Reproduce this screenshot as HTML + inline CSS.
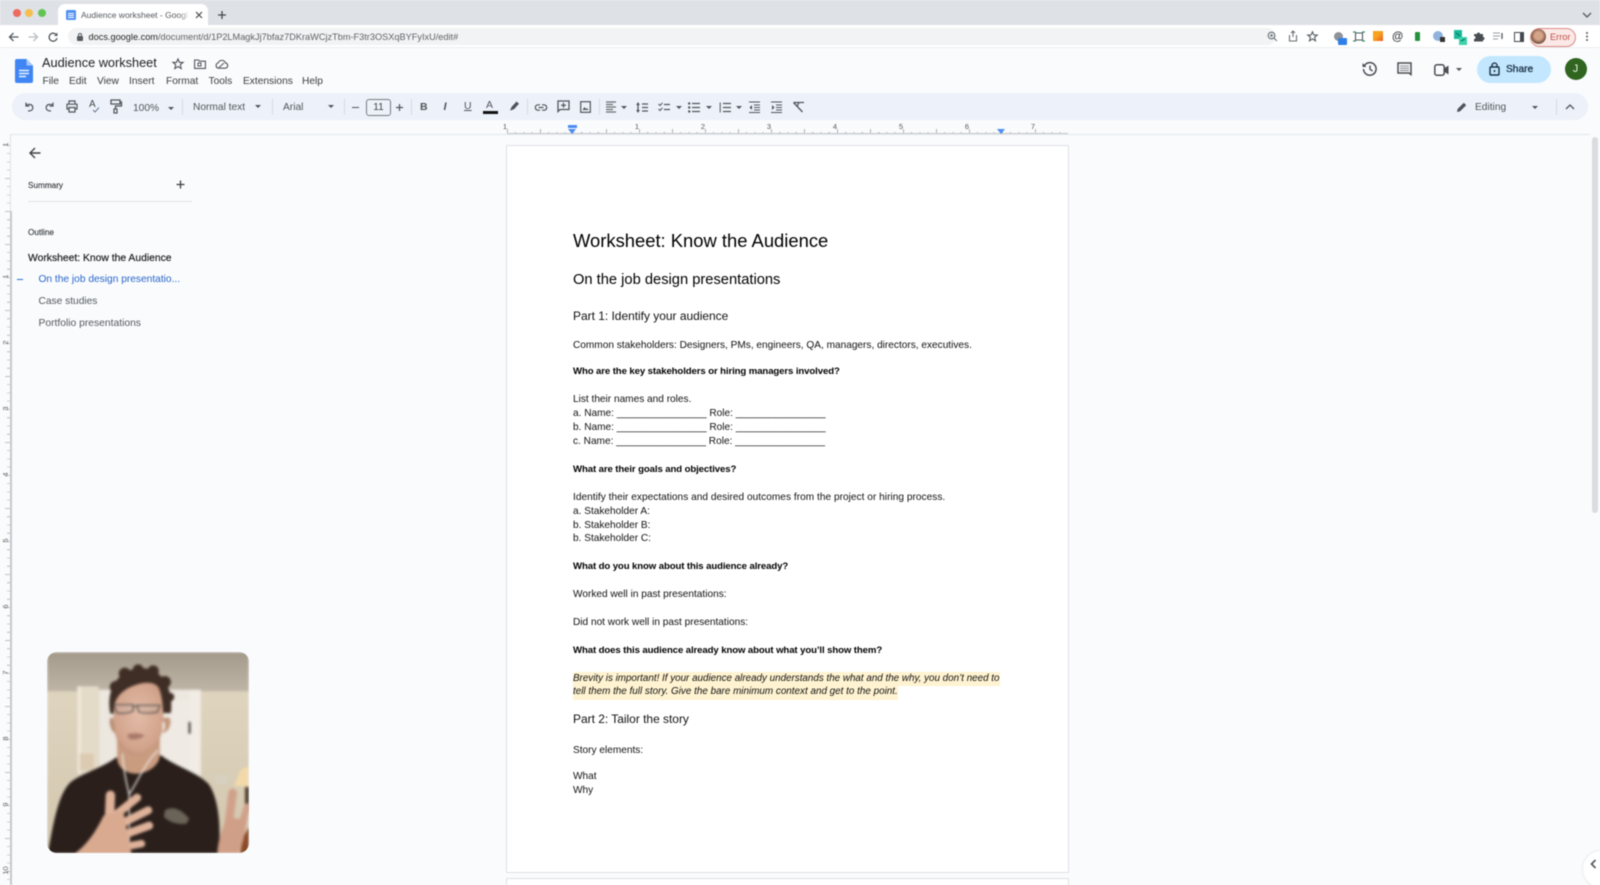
<!DOCTYPE html>
<html lang="en"><head><meta charset="utf-8"><title>Audience worksheet</title>
<style>
html,body{margin:0;padding:0;width:1600px;height:885px;overflow:hidden;background:#f9fbfd}
#w{position:absolute;left:0;top:0;width:1600px;height:885px;overflow:hidden;font-family:"Liberation Sans",sans-serif;filter:blur(.45px);background:#f9fbfd}
.a{position:absolute}
.t{position:absolute;white-space:nowrap}
svg{position:absolute;overflow:visible}
.d{position:absolute;left:573px;white-space:nowrap;font-size:10.1px;line-height:14px;color:#111;height:14px}
.b{font-weight:700;color:#000;font-size:9.6px;letter-spacing:-.1px}
.m{position:absolute;top:75px;font-size:10.2px;line-height:13px;color:#3c4043;white-space:nowrap}
.s{position:absolute;top:99px;width:1px;height:16px;background:#d7dbe3}
.c{position:absolute;width:0;height:0;border-left:3px solid transparent;border-right:3px solid transparent;border-top:3px solid #50545a}
.n{position:absolute;top:122px;font-size:7.5px;line-height:9px;color:#555;width:10px;text-align:center}
.v{position:absolute;left:1px;font-size:7.5px;line-height:9px;color:#666;width:9px;text-align:center;transform:rotate(-90deg)}
</style></head><body><div id="w">

<!-- tab strip -->
<div class="a" style="left:0;top:0;width:1600px;height:25px;background:#dee1e6"></div>
<div class="a" style="left:0;top:25px;width:1600px;height:23px;background:#fff"></div>
<div class="a" style="left:0;top:47px;width:1600px;height:1px;background:#eceef0"></div>
<div class="a" style="left:12.5px;top:9px;width:8px;height:8px;border-radius:50%;background:#ed6a5e"></div>
<div class="a" style="left:25px;top:9px;width:8px;height:8px;border-radius:50%;background:#f4bf4f"></div>
<div class="a" style="left:38px;top:9px;width:8px;height:8px;border-radius:50%;background:#61c554"></div>
<div class="a" style="left:58px;top:4px;width:150px;height:21px;background:#fff;border-radius:7px 7px 0 0"></div>
<div class="a" style="left:66px;top:10px;width:10px;height:10px;background:#4f8ff0;border-radius:1.5px"></div>
<div class="a" style="left:68px;top:13px;width:6px;height:1px;background:#fff;box-shadow:0 2px #fff,0 4px #fff"></div>
<div class="t" style="left:81px;top:9px;font-size:8.5px;line-height:12px;color:#54585d;width:106px;overflow:hidden">Audience worksheet - Google Docs</div>
<div class="a" style="left:178px;top:6px;width:14px;height:16px;background:linear-gradient(90deg,rgba(255,255,255,0),#fff)"></div>
<svg style="left:195px;top:11px" width="8" height="8"><path d="M1 1L7 7M7 1L1 7" stroke="#45494e" stroke-width="1.2"/></svg>
<svg style="left:217px;top:10px" width="10" height="10"><path d="M5 1V9M1 5H9" stroke="#45494e" stroke-width="1.3"/></svg>
<svg style="left:1582px;top:12px" width="10" height="6"><path d="M1 1L5 5L9 1" fill="none" stroke="#55595e" stroke-width="1.3"/></svg>

<!-- address -->
<svg style="left:8px;top:32px" width="11" height="10"><path d="M10.5 5H1.5M5.5 1L1.5 5L5.5 9" fill="none" stroke="#55595e" stroke-width="1.3"/></svg>
<svg style="left:28px;top:32px" width="11" height="10"><path d="M.5 5H9.5M5.5 1L9.5 5L5.5 9" fill="none" stroke="#b9bcc0" stroke-width="1.3"/></svg>
<svg style="left:48px;top:32px" width="11" height="11"><path d="M9 6.2A4 4 0 1 1 8 2.4" fill="none" stroke="#55595e" stroke-width="1.3"/><path d="M9.5 .5V4H6" fill="#55595e"/></svg>
<div class="a" style="left:68px;top:28px;width:1208px;height:17px;background:#f1f3f4;border-radius:9px"></div>
<div class="a" style="left:77px;top:36px;width:6px;height:5px;background:#55595e;border-radius:1px"></div>
<div class="a" style="left:78px;top:33px;width:2px;height:3px;border:1px solid #55595e;border-bottom:0;border-radius:2px 2px 0 0"></div>
<div class="t" style="left:88.5px;top:30.5px;font-size:9.2px;line-height:13px;color:#606469"><span style="color:#26282b">docs.google.com</span>/document/d/1P2LMagkJj7bfaz7DKraWCjzTbm-F3tr3OSXqBYFyIxU/edit#</div>
<svg style="left:1267px;top:31px" width="11" height="11"><circle cx="4.5" cy="4.5" r="3.3" fill="none" stroke="#6a6e73" stroke-width="1.1"/><path d="M7 7L10 10M3 4.5H6M4.5 3V6" stroke="#6a6e73"/></svg>
<svg style="left:1288px;top:30px" width="10" height="12"><path d="M1.5 5V11H8.5V5M3 3L5 1L7 3M5 1V7" fill="none" stroke="#6a6e73" stroke-width="1.1"/></svg>
<svg style="left:1307px;top:31px" width="11" height="11"><path d="M5.5 .8L6.9 4H10.2L7.6 6.2L8.5 9.8L5.5 7.9L2.5 9.8L3.4 6.2L.8 4H4.1Z" fill="none" stroke="#55595e" stroke-width="1.1"/></svg>

<!-- extension icons -->
<div class="a" style="left:1334px;top:32px;width:9px;height:9px;border-radius:50%;background:#8f9296"></div>
<div class="a" style="left:1338px;top:38px;width:9px;height:7px;background:#2f7fe8;border-radius:1px"></div>
<svg style="left:1353px;top:31px" width="12" height="11"><path d="M2.5 2H9.5V9H2.5Z" fill="none" stroke="#4e5c57" stroke-width="1.1"/><path d="M0 1H3M9 1H12M0 10H3M9 10H12" stroke="#3f8f6f" stroke-width="1.2"/></svg>
<div class="a" style="left:1373px;top:31px;width:10px;height:10px;background:linear-gradient(135deg,#f6a31f 45%,#ee5a23)"></div>
<div class="t" style="left:1392px;top:30px;font-size:11.5px;line-height:14px;font-weight:700;color:#3c3f43">@</div>
<div class="a" style="left:1415px;top:32px;width:5px;height:9px;background:#24913c;border-radius:1px"></div>
<div class="a" style="left:1433px;top:31px;width:10px;height:10px;border-radius:50%;background:#8fb3dc"></div>
<div class="a" style="left:1440px;top:37px;width:5px;height:5px;background:#333"></div>
<svg style="left:1454px;top:30px" width="14" height="15"><path d="M0 0H8V9H0Z" fill="#19b99a"/><path d="M5 7H13V15H5Z" fill="#3ed2ab"/><path d="M2 3L6 6M7 11L11 9" stroke="#0c6d5a"/></svg>
<svg style="left:1473px;top:31px" width="11" height="11"><path d="M1 3H4A1.5 1.5 0 0 1 7 3H10V6A1.5 1.5 0 0 1 10 9V10.5H1V8A1.5 1.5 0 0 0 1 5Z" fill="#4a4d52"/></svg>
<svg style="left:1493px;top:32px" width="12" height="9"><path d="M0 1H7M0 4H7M0 7H5" stroke="#9a9da1"/><path d="M9 1V7" stroke="#55595e" stroke-width="1.3"/></svg>
<div class="a" style="left:1514px;top:32px;height:8px;border:1.2px solid #44484c;border-right-width:4px;width:5px"></div>
<div class="a" style="left:1530px;top:28px;width:44px;height:17px;border:1px solid #d98a85;border-radius:10px;background:#fbe9e7"></div>
<div class="a" style="left:1531px;top:29px;width:15px;height:15px;border-radius:50%;background:radial-gradient(circle at 50% 45%,#d5a488 35%,#6d4a38 72%)"></div>
<div class="t" style="left:1550px;top:31px;font-size:9.2px;line-height:13px;color:#bf4e47">Error</div>
<div class="a" style="left:1585.5px;top:32px;width:2px;height:2px;background:#55595e;border-radius:50%;box-shadow:0 3.5px #55595e,0 7px #55595e"></div>

<!-- docs header -->
<svg style="left:15px;top:59px" width="18" height="24"><path d="M2 0H11.5L18 6.5V22A2 2 0 0 1 16 24H2A2 2 0 0 1 0 22V2A2 2 0 0 1 2 0Z" fill="#3f86f4"/><path d="M11.5 0L18 6.5H11.5Z" fill="#a5c6fa"/><path d="M4 11.5H14M4 14.5H14M4 17.5H11" stroke="#e6effd" stroke-width="1.4"/></svg>
<div class="t" style="left:42px;top:54px;font-size:12.75px;line-height:17px;color:#1f1f1f">Audience worksheet</div>
<svg style="left:172px;top:58px" width="12" height="12"><path d="M6 1L7.5 4.4H11L8.3 6.7L9.2 10.6L6 8.5L2.8 10.6L3.7 6.7L1 4.4H4.5Z" fill="none" stroke="#50545a" stroke-width="1.1"/></svg>
<svg style="left:194px;top:59px" width="12" height="10"><path d="M.6 1H4.5L5.5 2.2H11.4V9.4H.6Z" fill="none" stroke="#50545a" stroke-width="1.1"/><path d="M4 4H7V7H4Z" fill="none" stroke="#50545a"/></svg>
<svg style="left:215px;top:59px" width="14" height="10"><path d="M3.5 9.2A2.7 2.7 0 0 1 3.2 3.9A3.9 3.9 0 0 1 10.5 3.9A2.7 2.7 0 0 1 10.5 9.2Z" fill="none" stroke="#50545a" stroke-width="1.1"/><path d="M4 8.5L9 4" stroke="#50545a"/></svg>
<div class="m" style="left:42.5px">File</div><div class="m" style="left:69px">Edit</div><div class="m" style="left:97px">View</div><div class="m" style="left:129px">Insert</div><div class="m" style="left:166px">Format</div><div class="m" style="left:208.5px">Tools</div><div class="m" style="left:243px">Extensions</div><div class="m" style="left:302px">Help</div>

<svg style="left:1362px;top:61px" width="16" height="16"><path d="M2.5 4.5A6.3 6.3 0 1 1 1.5 8" fill="none" stroke="#4a4e53" stroke-width="1.5"/><path d="M.5 2V6H4.5" fill="#4a4e53"/><path d="M8 4.5V8.3L10.6 10" fill="none" stroke="#4a4e53" stroke-width="1.4"/></svg>
<svg style="left:1397px;top:62px" width="15" height="15"><path d="M1 1H14V12.5L12 11H1Z" fill="none" stroke="#4a4e53" stroke-width="1.5"/><path d="M3 4H12M3 6.2H12M3 8.4H12" stroke="#8c8f93" stroke-width="1.1"/></svg>
<svg style="left:1434px;top:64px" width="15" height="12"><rect x=".8" y=".8" width="9.4" height="10.4" rx="2" fill="none" stroke="#4a4e53" stroke-width="1.5"/><path d="M10 4.5L14.5 1.5V10.5L10 7.5Z" fill="#4a4e53"/></svg>
<div class="c" style="left:1456px;top:68px"></div>
<div class="a" style="left:1477px;top:56px;width:74px;height:27px;background:#c2e7ff;border-radius:14px"></div>
<svg style="left:1489px;top:62px" width="11" height="14"><rect x="1" y="5" width="9" height="8" rx="1" fill="none" stroke="#1b2f45" stroke-width="1.4"/><path d="M3 5V3.5A2.5 2.5 0 0 1 8 3.5V5" fill="none" stroke="#1b2f45" stroke-width="1.3"/><circle cx="5.5" cy="9" r="1" fill="#1b2f45"/></svg>
<div class="t" style="left:1506px;top:63px;font-size:10.2px;line-height:14px;color:#1b2f45;-webkit-text-stroke:.3px #1b2f45">Share</div>
<div class="a" style="left:1564.5px;top:58px;width:22px;height:22px;border-radius:50%;background:#2f651f"></div>
<div class="t" style="left:1564.5px;top:62px;width:22px;text-align:center;font-size:11px;line-height:14px;color:#e9f0e5">J</div>

<!-- toolbar -->
<div class="a" style="left:12px;top:93px;width:1576px;height:27px;background:#edf2fa;border-radius:14px"></div>
<svg style="left:24px;top:102px" width="10" height="10"><path d="M2 .5V4H5.5M2 3.5C4 1.5 9 2 8.8 6C8.7 8 7 9 4 9" fill="none" stroke="#50545a" stroke-width="1.2"/></svg>
<svg style="left:45px;top:102px" width="10" height="10"><path d="M8 .5V4H4.5M8 3.5C6 1.5 1 2 1.2 6C1.3 8 3 9 6 9" fill="none" stroke="#50545a" stroke-width="1.2"/></svg>
<svg style="left:66px;top:100px" width="12" height="13"><path d="M3 4V1H9V4M3 9H1V4.2H11V9H9M3 7.5H9V12H3Z" fill="none" stroke="#50545a" stroke-width="1.2"/></svg>
<div class="t" style="left:89px;top:99px;font-size:10px;line-height:12px;color:#44484d">A</div>
<svg style="left:92px;top:107px" width="8" height="6"><path d="M1 3L3 5L7 .5" fill="none" stroke="#6f7e93" stroke-width="1.1"/></svg>
<svg style="left:110px;top:99px" width="12" height="15"><path d="M1 1H10V5H1ZM10 3H11.5V7H5.5V10" fill="none" stroke="#50545a" stroke-width="1.3"/><rect x="4" y="10" width="3" height="4" fill="none" stroke="#50545a" stroke-width="1.2"/></svg>
<div class="t" style="left:133px;top:101.5px;font-size:10.2px;line-height:14px;color:#50545a">100%</div>
<div class="c" style="left:168px;top:107px"></div>
<div class="s" style="left:182px"></div>
<div class="t" style="left:193px;top:100.5px;font-size:10.2px;line-height:14px;color:#50545a">Normal text</div>
<div class="c" style="left:255px;top:105px"></div>
<div class="s" style="left:272px"></div>
<div class="t" style="left:283px;top:100.5px;font-size:10.2px;line-height:14px;color:#50545a">Arial</div>
<div class="c" style="left:328px;top:105px"></div>
<div class="s" style="left:344px"></div>
<div class="a" style="left:352px;top:107px;width:7px;height:1.3px;background:#50545a"></div>
<div class="a" style="left:366px;top:99px;width:23px;height:15px;border:1px solid #777b80;border-radius:3px"></div>
<div class="t" style="left:366px;top:100.5px;width:25px;text-align:center;font-size:10px;line-height:14px;color:#3c4043">11</div>
<svg style="left:395px;top:103px" width="9" height="9"><path d="M4.5 1V8M1 4.5H8" stroke="#50545a" stroke-width="1.2"/></svg>
<div class="s" style="left:411px"></div>
<div class="t" style="left:420px;top:100px;font-size:10.5px;line-height:14px;font-weight:700;color:#50545a">B</div>
<div class="t" style="left:443.5px;top:100px;font-size:11px;line-height:14px;font-style:italic;font-weight:700;color:#50545a">I</div>
<div class="t" style="left:464px;top:100px;font-size:10.5px;line-height:13px;text-decoration:underline;color:#50545a">U</div>
<div class="t" style="left:486px;top:98px;font-size:10.5px;line-height:14px;color:#50545a">A</div>
<div class="a" style="left:483px;top:111px;width:15px;height:3px;background:#111"></div>
<svg style="left:509px;top:100px" width="11" height="12"><path d="M2.5 7L7.5 1.5L10 3.8L5 9.3ZM1 10.5L2.5 7L5 9.3Z" fill="#50545a"/></svg>
<div class="s" style="left:527px"></div>
<svg style="left:535px;top:104px" width="12" height="7"><path d="M5 .8H3A2.7 2.7 0 0 0 3 6.2H5M7 .8H9A2.7 2.7 0 0 1 9 6.2H7M3.5 3.5H8.5" fill="none" stroke="#50545a" stroke-width="1.2"/></svg>
<svg style="left:557px;top:100px" width="13" height="13"><path d="M1 1H12V9.5H3L1 11.5Z" fill="none" stroke="#50545a" stroke-width="1.3"/><path d="M6.5 2.8V7.7M4 5.25H9" stroke="#50545a" stroke-width="1.2"/></svg>
<svg style="left:580px;top:101px" width="11" height="12"><rect x=".7" y=".7" width="9.6" height="10.6" fill="none" stroke="#50545a" stroke-width="1.2"/><path d="M2.5 9L4.5 6L6 8L7 7L8.5 9Z" fill="#50545a"/></svg>
<div class="s" style="left:599px"></div>
<svg style="left:606px;top:101px" width="10" height="12"><path d="M0 1H10M0 3.5H7M0 6H10M0 8.5H7M0 11H10" stroke="#6a6e73" stroke-width="1.3"/></svg>
<div class="c" style="left:621px;top:106px"></div>
<svg style="left:636px;top:102px" width="12" height="11"><path d="M2 .5V10.5" stroke="#50545a" stroke-width="1.3"/><path d="M0 3L2 .5L4 3ZM0 8L2 10.5L4 8Z" fill="#50545a"/><path d="M6 2H12M6 5.5H12M6 9H12" stroke="#50545a" stroke-width="1.2"/></svg>
<svg style="left:658px;top:102px" width="12" height="11"><path d="M.5 2L2 3.5L4.5 .8M.5 7L2 8.5L4.5 5.8" fill="none" stroke="#50545a"/><path d="M6 2.5H12M6 7.5H12" stroke="#50545a" stroke-width="1.2"/></svg>
<div class="c" style="left:676px;top:106px"></div>
<svg style="left:688px;top:102px" width="12" height="11"><circle cx="1.2" cy="1.5" r="1.2" fill="#50545a"/><circle cx="1.2" cy="5.5" r="1.2" fill="#50545a"/><circle cx="1.2" cy="9.5" r="1.2" fill="#50545a"/><path d="M4 1.5H12M4 5.5H12M4 9.5H12" stroke="#50545a" stroke-width="1.2"/></svg>
<div class="c" style="left:706px;top:106px"></div>
<svg style="left:719px;top:102px" width="12" height="11"><path d="M1.2 .5V10.5" stroke="#50545a"/><path d="M4 1.5H12M4 5.5H12M4 9.5H12" stroke="#50545a" stroke-width="1.2"/></svg>
<div class="c" style="left:736px;top:106px"></div>
<svg style="left:749px;top:101px" width="11" height="12"><path d="M0 1H11M5 4H11M5 6.5H11M5 9H11M0 11.5H11" stroke="#50545a" stroke-width="1.1"/><path d="M3 4V9L.5 6.5Z" fill="#50545a"/></svg>
<svg style="left:771px;top:101px" width="11" height="12"><path d="M0 1H11M5 4H11M5 6.5H11M5 9H11M0 11.5H11" stroke="#50545a" stroke-width="1.1"/><path d="M1 4V9L3.5 6.5Z" fill="#50545a"/></svg>
<svg style="left:792px;top:101px" width="13" height="12"><path d="M1.5 1.5H12M6.8 1.5L5 6M1.5 1.5L10.5 11" fill="none" stroke="#50545a" stroke-width="1.3"/></svg>

<svg style="left:1456px;top:101px" width="12" height="12"><path d="M1 11L1.6 8L7.8 1.8L10.2 4.2L4 10.4Z" fill="#50545a"/></svg>
<div class="t" style="left:1475px;top:100.5px;font-size:10.2px;line-height:14px;color:#50545a">Editing</div>
<div class="c" style="left:1532px;top:106px"></div>
<div class="s" style="left:1556px"></div>
<svg style="left:1565px;top:104px" width="10" height="6"><path d="M1 5L5 1L9 5" fill="none" stroke="#50545a" stroke-width="1.3"/></svg>

<!-- horizontal ruler -->
<div class="a" style="left:507px;top:133px;width:561px;height:1px;background:#c4c7cb"></div>
<div class="a" style="left:507px;top:131.5px;width:561px;height:1.5px;background:repeating-linear-gradient(90deg,#b9bcc0 0 1px,transparent 1px 8.25px)"></div>
<div class="a" style="left:507px;top:129px;width:561px;height:2.5px;background:repeating-linear-gradient(90deg,#b0b3b7 0 1px,transparent 1px 33px)"></div>
<div class="n" style="left:500px">1</div><div class="n" style="left:632px">1</div><div class="n" style="left:698px">2</div><div class="n" style="left:764px">3</div><div class="n" style="left:830px">4</div><div class="n" style="left:896px">5</div><div class="n" style="left:962px">6</div><div class="n" style="left:1028px">7</div>
<div class="a" style="left:568px;top:125px;width:9px;height:3px;background:#4e8cf0"></div>
<div class="a" style="left:568px;top:129px;width:0;height:0;border-left:4.5px solid transparent;border-right:4.5px solid transparent;border-top:5px solid #4e8cf0"></div>
<div class="a" style="left:997px;top:129px;width:0;height:0;border-left:4.5px solid transparent;border-right:4.5px solid transparent;border-top:5px solid #4e8cf0"></div>

<!-- canvas border + rulers -->
<div class="a" style="left:10px;top:133.5px;width:1580px;height:1.5px;background:#e5e8ec"></div>
<div class="a" style="left:10px;top:134px;width:1px;height:77px;background:#e3e6ea"></div>
<div class="a" style="left:10px;top:211px;width:1.5px;height:674px;background:#c6cacf"></div>
<div class="a" style="left:7px;top:145px;width:3px;height:740px;background:repeating-linear-gradient(180deg,#cfd2d6 0 1px,transparent 1px 8.25px)"></div>
<div class="a" style="left:5px;top:145px;width:5px;height:740px;background:repeating-linear-gradient(180deg,#c0c3c7 0 1px,transparent 1px 33px)"></div>
<div class="v" style="top:140px">1</div><div class="v" style="top:272px">1</div><div class="v" style="top:338px">2</div><div class="v" style="top:404px">3</div><div class="v" style="top:470px">4</div><div class="v" style="top:536px">5</div><div class="v" style="top:602px">6</div><div class="v" style="top:668px">7</div><div class="v" style="top:734px">8</div><div class="v" style="top:800px">9</div><div class="v" style="top:866px">10</div>

<!-- sidebar -->
<svg style="left:29px;top:147px" width="12" height="12"><path d="M11.5 6H1.5M6 1L1 6L6 11" fill="none" stroke="#3f4347" stroke-width="1.4"/></svg>
<div class="t" style="left:28px;top:180px;font-size:8.2px;line-height:12px;color:#3c4043;-webkit-text-stroke:.15px #3c4043">Summary</div>
<svg style="left:176px;top:180px" width="9" height="9"><path d="M4.5 .5V8.5M.5 4.5H8.5" stroke="#3c4043" stroke-width="1.3"/></svg>
<div class="a" style="left:28px;top:201px;width:164px;height:1px;background:#e1e4e8"></div>
<div class="t" style="left:28px;top:227px;font-size:8.2px;line-height:12px;color:#3c4043;-webkit-text-stroke:.15px #3c4043">Outline</div>
<div class="t" style="left:28px;top:251.5px;font-size:10.35px;line-height:14px;color:#202124;-webkit-text-stroke:.2px #202124">Worksheet: Know the Audience</div>
<div class="a" style="left:17px;top:278.5px;width:6px;height:1.5px;background:#2f6fd0"></div>
<div class="t" style="left:38.5px;top:273px;font-size:10.2px;line-height:14px;color:#2a66c8">On the job design presentatio...</div>
<div class="t" style="left:38.5px;top:295px;font-size:10.2px;line-height:14px;color:#55595e">Case studies</div>
<div class="t" style="left:38.5px;top:317px;font-size:10.3px;line-height:14px;color:#55595e">Portfolio presentations</div>

<!-- page -->
<div class="a" style="left:506px;top:145px;height:726px;background:#fff;border:1px solid #dfe1e5;width:561px"></div>
<div class="a" style="left:506px;top:878px;width:561px;height:7px;background:#fff;border:1px solid #dfe1e5;border-bottom:0"></div>

<div class="d" style="top:230px;font-size:18.4px;line-height:21px;height:21px;color:#000">Worksheet: Know the Audience</div>
<div class="d" style="top:272px;font-size:14.7px;line-height:17px;height:17px;color:#000">On the job design presentations</div>
<div class="d" style="top:308px;font-size:11.95px;line-height:16px;height:16px;color:#111">Part 1: Identify your audience</div>
<div class="d" style="top:338.5px">Common stakeholders: Designers, PMs, engineers, QA, managers, directors, executives.</div>
<div class="d b" style="top:365px">Who are the key stakeholders or hiring managers involved?</div>
<div class="d" style="top:393px">List their names and roles.</div>
<div class="d" style="top:406.5px">a. Name: ________________ Role: ________________</div>
<div class="d" style="top:421px">b. Name: ________________ Role: ________________</div>
<div class="d" style="top:435px">c. Name: ________________ Role: ________________</div>
<div class="d b" style="top:463px">What are their goals and objectives?</div>
<div class="d" style="top:491px;letter-spacing:.03px">Identify their expectations and desired outcomes from the project or hiring process.</div>
<div class="d" style="top:505px">a. Stakeholder A:</div>
<div class="d" style="top:518.5px">b. Stakeholder B:</div>
<div class="d" style="top:532px">b. Stakeholder C:</div>
<div class="d b" style="top:559.5px">What do you know about this audience already?</div>
<div class="d" style="top:587.5px">Worked well in past presentations:</div>
<div class="d" style="top:616px">Did not work well in past presentations:</div>
<div class="d b" style="top:643.5px">What does this audience already know about what you’ll show them?</div>
<div class="d" style="top:672px;font-style:italic;font-size:9.83px"><span style="background:#fff3d1;display:inline-block;height:14px">Brevity is important! If your audience already understands the what and the why, you don’t need to</span></div>
<div class="d" style="top:685px;font-style:italic;font-size:9.9px"><span style="background:#fff3d1;display:inline-block;height:14.5px">tell them the full story. Give the bare minimum context and get to the point.</span></div>
<div class="d" style="top:711px;font-size:11.95px;line-height:16px;height:16px;color:#111">Part 2: Tailor the story</div>
<div class="d" style="top:744px">Story elements:</div>
<div class="d" style="top:770px">What</div>
<div class="d" style="top:784px">Why</div>

<!-- scrollbar + side button -->
<div class="a" style="left:1592px;top:137px;width:6px;height:376px;background:#dadce0;border-radius:3px"></div>
<div class="a" style="left:1583px;top:851px;width:36px;height:36px;border-radius:50%;background:#fff;box-shadow:0 0 3px rgba(0,0,0,.12)"></div>
<svg style="left:1590px;top:859px" width="7" height="10"><path d="M5.5 1L1.5 5L5.5 9" fill="none" stroke="#50545a" stroke-width="1.6"/></svg>

<!-- presenter photo -->
<div class="a" style="left:47px;top:651.5px;width:202px;height:201.5px;border-radius:10px;overflow:hidden">
<svg width="202" height="201" viewBox="52 35 605 603" preserveAspectRatio="none" style="left:0;top:0;filter:blur(1.2px)">
<defs>
<linearGradient id="ce" x1="0" y1="0" x2="0" y2="1"><stop offset="0" stop-color="#a49a8b"/><stop offset="1" stop-color="#bfb5a6"/></linearGradient>
<linearGradient id="wl" x1="0" y1="0" x2="0" y2="1"><stop offset="0" stop-color="#e2d8c2"/><stop offset="1" stop-color="#d2c6ae"/></linearGradient>
<radialGradient id="fc" cx=".5" cy=".45" r=".6"><stop offset="0" stop-color="#e2bca8"/><stop offset=".8" stop-color="#d2a38b"/><stop offset="1" stop-color="#bb8d75"/></radialGradient>
</defs>
<rect x="52" y="35" width="605" height="603" fill="url(#wl)"/>
<rect x="52" y="35" width="605" height="118" fill="url(#ce)"/>
<rect x="142" y="138" width="65" height="262" fill="#e4dac8"/>
<rect x="145" y="138" width="8" height="262" fill="#f2ebde"/>
<rect x="208" y="148" width="305" height="260" fill="#ece7df"/>
<rect x="385" y="180" width="95" height="210" fill="#efeae3"/>
<rect x="480" y="150" width="32" height="250" fill="#f1ece5"/>
<rect x="476" y="245" width="6" height="35" fill="#3b3633"/>
<rect x="150" y="340" width="42" height="50" fill="#dccbb2"/>
<rect x="558" y="402" width="34" height="30" fill="#d7d0c0"/>
<path d="M612 437L630 392Q645 378 657 380V440Z" fill="#f1d9aa"/>
<rect x="645" y="440" width="12" height="70" fill="#4d3b2a"/>
<path d="M640 590L657 560V640H630Z" fill="#8b4a28"/>
<path d="M56 632C70 560 85 450 130 420C170 395 230 375 258 352L394 345C430 375 500 395 535 430C565 470 575 560 565 640H56Z" fill="#2a1f1b"/>
<path d="M262 290H390V345C388 380 345 402 315 400C285 398 262 380 262 350Z" fill="#c99c80"/>
<path d="M242 220C230 165 248 102 318 84C390 74 432 135 423 218Z" fill="#3f2e25"/>
<g fill="#3f2e25">
<circle cx="258" cy="140" r="18"/><circle cx="285" cy="100" r="18"/><circle cx="325" cy="88" r="16"/><circle cx="370" cy="92" r="17"/><circle cx="405" cy="125" r="18"/><circle cx="420" cy="170" r="13"/>
</g>
<path d="M252 205C255 170 280 140 340 128C365 125 385 130 390 150C396 170 400 190 402 260L382 315L342 343H302L266 314L250 260Z" fill="url(#fc)"/>
<path d="M400 235Q418 225 422 240Q422 270 400 278Z" fill="#c4967c"/>
<path d="M250 235Q238 225 240 250Q245 275 256 278Z" fill="#b98d75"/>
<path d="M252 193H310V212Q290 222 262 218ZM322 195H390L383 215Q350 222 327 215ZM310 198H322" fill="#b9afa8" fill-opacity=".2" stroke="#55504e" stroke-width="3.5"/>
<path d="M292 282Q320 274 345 285Q325 302 298 296Z" fill="#a97a6b"/>
<path d="M278 340C280 380 290 430 298 462C320 430 350 360 385 330M298 462V605" fill="none" stroke="#ece8e2" stroke-width="4"/>
<rect x="398" y="245" width="7" height="24" fill="#f0ece5"/>
<path d="M405 510Q440 490 478 535L470 550Q430 555 402 530Z" fill="#6a6357"/>
<g stroke="#dfb39a" stroke-linecap="round" fill="none">
<path d="M238 560L242 465" stroke-width="28"/>
<path d="M250 530L322 472" stroke-width="24"/>
<path d="M265 555L355 510" stroke-width="24"/>
<path d="M265 590L358 556" stroke-width="24"/>
<path d="M270 622L335 610" stroke-width="22"/>
</g>
<path d="M135 640C175 610 200 570 222 525L280 510L305 640Z" fill="#d9aa90"/>
<g stroke="#d1a28b" stroke-linecap="round" fill="none">
<path d="M595 560L608 458" stroke-width="26"/>
<path d="M630 570L652 500" stroke-width="22"/>
</g>
<path d="M562 640C565 590 580 555 595 530L650 540L640 600L625 640Z" fill="#cf9f87"/>
</svg></div>

</div></body></html>
